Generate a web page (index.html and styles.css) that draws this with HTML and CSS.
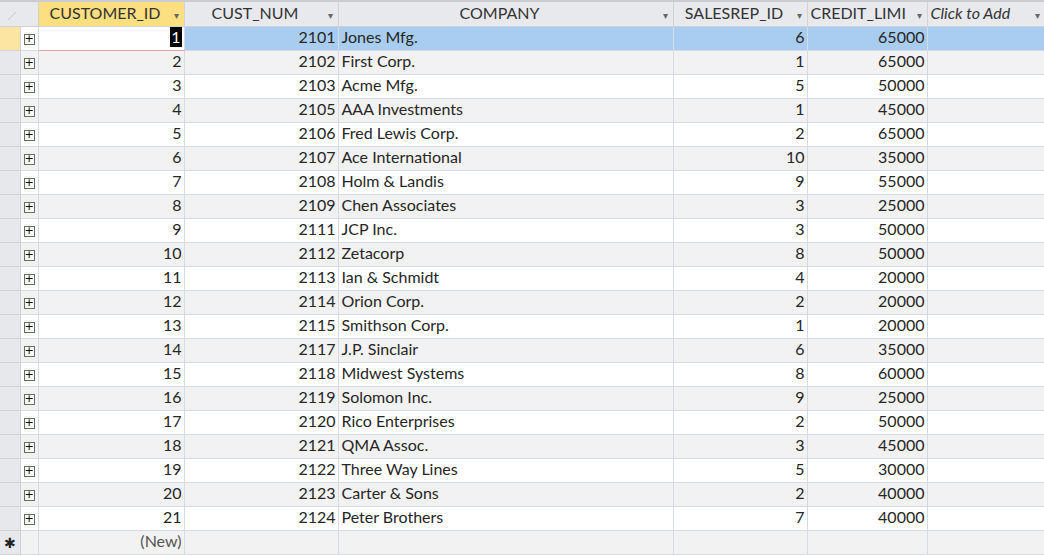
FILE: index.html
```html
<!DOCTYPE html>
<html>
<head>
<meta charset="utf-8">
<link rel="stylesheet" href="styles.css">
</head>
<body>
<div class="sheet">
  <table class="grid">
    <colgroup>
      <col class="c-sel"><col class="c-exp"><col class="c-id"><col class="c-num"><col class="c-co"><col class="c-rep"><col class="c-cred"><col class="c-add">
    </colgroup>
    <thead>
      <tr>
        <th class="corner"><svg width="20" height="24" viewBox="0 0 20 24"><line x1="8" y1="18" x2="16" y2="10" stroke="#c7cacf" stroke-width="1"/></svg></th>
        <th class="hexp"></th>
        <th class="hsel"><span class="ht">CUSTOMER_ID</span><span class="arr">▾</span></th>
        <th><span class="ht">CUST_NUM</span><span class="arr">▾</span></th>
        <th><span class="ht">COMPANY</span><span class="arr">▾</span></th>
        <th><span class="ht">SALESREP_ID</span><span class="arr">▾</span></th>
        <th class="hleft"><span class="ht">CREDIT_LIMI</span><span class="arr">▾</span></th>
        <th class="hleft"><span class="ht it">Click to Add</span><span class="arr">▾</span></th>
      </tr>
    </thead>
    <tbody>
      <tr class="cur">
        <td class="sel on"></td><td class="exp"><span class="box">+</span></td>
        <td class="r edit"><span class="hl">1</span></td><td class="r">2101</td><td>Jones Mfg.</td><td class="r">6</td><td class="r">65000</td><td></td>
      </tr>
      <tr class="alt"><td class="sel"></td><td class="exp"><span class="box">+</span></td><td class="r">2</td><td class="r">2102</td><td>First Corp.</td><td class="r">1</td><td class="r">65000</td><td></td></tr>
      <tr><td class="sel"></td><td class="exp"><span class="box">+</span></td><td class="r">3</td><td class="r">2103</td><td>Acme Mfg.</td><td class="r">5</td><td class="r">50000</td><td></td></tr>
      <tr class="alt"><td class="sel"></td><td class="exp"><span class="box">+</span></td><td class="r">4</td><td class="r">2105</td><td>AAA Investments</td><td class="r">1</td><td class="r">45000</td><td></td></tr>
      <tr><td class="sel"></td><td class="exp"><span class="box">+</span></td><td class="r">5</td><td class="r">2106</td><td>Fred Lewis Corp.</td><td class="r">2</td><td class="r">65000</td><td></td></tr>
      <tr class="alt"><td class="sel"></td><td class="exp"><span class="box">+</span></td><td class="r">6</td><td class="r">2107</td><td>Ace International</td><td class="r">10</td><td class="r">35000</td><td></td></tr>
      <tr><td class="sel"></td><td class="exp"><span class="box">+</span></td><td class="r">7</td><td class="r">2108</td><td>Holm &amp; Landis</td><td class="r">9</td><td class="r">55000</td><td></td></tr>
      <tr class="alt"><td class="sel"></td><td class="exp"><span class="box">+</span></td><td class="r">8</td><td class="r">2109</td><td>Chen Associates</td><td class="r">3</td><td class="r">25000</td><td></td></tr>
      <tr><td class="sel"></td><td class="exp"><span class="box">+</span></td><td class="r">9</td><td class="r">2111</td><td>JCP Inc.</td><td class="r">3</td><td class="r">50000</td><td></td></tr>
      <tr class="alt"><td class="sel"></td><td class="exp"><span class="box">+</span></td><td class="r">10</td><td class="r">2112</td><td>Zetacorp</td><td class="r">8</td><td class="r">50000</td><td></td></tr>
      <tr><td class="sel"></td><td class="exp"><span class="box">+</span></td><td class="r">11</td><td class="r">2113</td><td>Ian &amp; Schmidt</td><td class="r">4</td><td class="r">20000</td><td></td></tr>
      <tr class="alt"><td class="sel"></td><td class="exp"><span class="box">+</span></td><td class="r">12</td><td class="r">2114</td><td>Orion Corp.</td><td class="r">2</td><td class="r">20000</td><td></td></tr>
      <tr><td class="sel"></td><td class="exp"><span class="box">+</span></td><td class="r">13</td><td class="r">2115</td><td>Smithson Corp.</td><td class="r">1</td><td class="r">20000</td><td></td></tr>
      <tr class="alt"><td class="sel"></td><td class="exp"><span class="box">+</span></td><td class="r">14</td><td class="r">2117</td><td>J.P. Sinclair</td><td class="r">6</td><td class="r">35000</td><td></td></tr>
      <tr><td class="sel"></td><td class="exp"><span class="box">+</span></td><td class="r">15</td><td class="r">2118</td><td>Midwest Systems</td><td class="r">8</td><td class="r">60000</td><td></td></tr>
      <tr class="alt"><td class="sel"></td><td class="exp"><span class="box">+</span></td><td class="r">16</td><td class="r">2119</td><td>Solomon Inc.</td><td class="r">9</td><td class="r">25000</td><td></td></tr>
      <tr><td class="sel"></td><td class="exp"><span class="box">+</span></td><td class="r">17</td><td class="r">2120</td><td>Rico Enterprises</td><td class="r">2</td><td class="r">50000</td><td></td></tr>
      <tr class="alt"><td class="sel"></td><td class="exp"><span class="box">+</span></td><td class="r">18</td><td class="r">2121</td><td>QMA Assoc.</td><td class="r">3</td><td class="r">45000</td><td></td></tr>
      <tr><td class="sel"></td><td class="exp"><span class="box">+</span></td><td class="r">19</td><td class="r">2122</td><td>Three Way Lines</td><td class="r">5</td><td class="r">30000</td><td></td></tr>
      <tr class="alt"><td class="sel"></td><td class="exp"><span class="box">+</span></td><td class="r">20</td><td class="r">2123</td><td>Carter &amp; Sons</td><td class="r">2</td><td class="r">40000</td><td></td></tr>
      <tr><td class="sel"></td><td class="exp"><span class="box">+</span></td><td class="r">21</td><td class="r">2124</td><td>Peter Brothers</td><td class="r">7</td><td class="r">40000</td><td></td></tr>
      <tr class="alt newrow"><td class="sel star">✱</td><td class="exp"></td><td class="r">(New)</td><td class="r"></td><td></td><td class="r"></td><td class="r"></td><td></td></tr>
    </tbody>
  </table>
</div>
</body>
</html>
```
FILE: styles.css
```css
html, body {
  margin: 0;
  padding: 0;
  background: #ffffff;
}
.sheet {
  width: 1044px;
  height: 556px;
  overflow: hidden;
  border-top: 2px solid #c9ccd1;
  box-sizing: border-box;
  background: #ffffff;
}
.grid {
  border-collapse: collapse;
  table-layout: fixed;
  width: 1045px;
  font-family: Lato, "Open Sans", sans-serif;
  font-size: 16px;
  color: #262626;
}
.c-sel { width: 20px; }
.c-exp { width: 18px; }
.c-id { width: 146px; }
.c-num { width: 154px; }
.c-co { width: 335px; }
.c-rep { width: 134px; }
.c-cred { width: 120px; }
.c-add { width: 118px; }

thead th {
  height: 24px;
  padding: 0 6px 3px 6px;
  background: #e8e9ec;
  border-left: 1px solid #cfd2d8;
  border-bottom: 1px solid #cfd2d8;
  font-weight: normal;
  color: #333;
  text-align: center;
  white-space: nowrap;
  overflow: hidden;
  position: relative;
  box-sizing: border-box;
  line-height: 20px;
}
thead th .ht {
  display: inline-block;
  padding-right: 12px;
}
thead th.hleft {
  text-align: left;
  padding-left: 3px;
}
thead th .ht.it { font-style: italic; }
thead th .arr {
  position: absolute;
  right: 5px;
  top: 3px;
  font-size: 10px;
  color: #666;
}
thead th.corner {
  padding: 0;
  border-left: none;
  background: #e8e9ec;
}
thead th.corner svg { display: block; }
thead th.hexp {
  padding: 0;
  background: #e8e9ec;
  border-left: none;
}
thead th.hsel {
  background: #fcdf80;
}

tbody td {
  height: 24px;
  padding: 0 2px 3px 3px;
  border-left: 1px solid #d6dbe3;
  border-bottom: 1px solid #d6dbe3;
  white-space: nowrap;
  overflow: hidden;
  box-sizing: border-box;
  line-height: 20px;
}
tbody tr.alt td { background: #f2f2f2; }
tbody td.r { text-align: right; }
tbody td.sel {
  background: #e6e8eb !important;
  border-left: none;
  border-bottom: 1px solid #cfd2d8;
  border-right: 1px solid #cfd2d8;
  padding: 0;
}
tbody td.sel.on { background: #fce4a3 !important; }
tbody td.exp {
  border-left: none;
  padding: 0 0 2px 0;
  text-align: center;
}
.box {
  display: inline-block;
  width: 9px;
  height: 9px;
  border: 1px solid #6b6b6b;
  background: #fff;
  font-size: 11px;
  line-height: 8px;
  text-align: center;
  color: #000;
  vertical-align: 2px;
  font-family: "DejaVu Sans", sans-serif;
}
tbody tr.cur td { background: #a9cdf0; }
tbody tr.cur td.exp { background: #ffffff; }
tbody tr.cur td.edit {
  background: #ffffff;
  border-bottom: 1px solid #e6a3a3;
}
.hl {
  display: inline-block;
  background: #000;
  color: #fff;
  padding: 0 1px;
  line-height: 20px;
  vertical-align: top;
}
td.star {
  text-align: center;
  font-size: 14px;
  color: #222;
  padding-bottom: 2px;
  font-family: "DejaVu Sans", sans-serif;
}
tr.newrow td.r { color: #555; }
```
